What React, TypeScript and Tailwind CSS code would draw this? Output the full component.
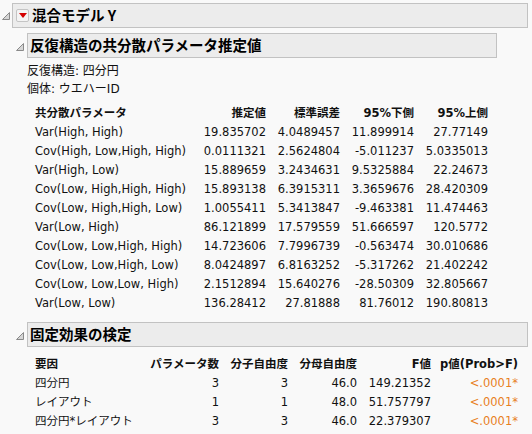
import React from "react";

const body = { fontFamily: '"DejaVu Sans", "Noto Sans CJK JP", sans-serif' };
const title = { fontFamily: '"Noto Sans CJK JP", "DejaVu Sans", sans-serif' };

function Tri() {
  return (
    <svg width="8" height="8" viewBox="0 0 8 8" className="shrink-0">
      <polygon points="7.5,0.5 7.5,7.5 0.5,7.5" fill="#d6d6d6" stroke="#8a8a8a" strokeWidth="1" />
    </svg>
  );
}

function RedBtn() {
  return (
    <div className="w-[13px] h-[13px] border border-[#c4c4c4] rounded-[2px] bg-[#f4f4f4] flex items-center justify-center shrink-0">
      <svg width="8" height="5" viewBox="0 0 8 5">
        <polygon points="0,0 8,0 4,5" fill="#d40000" />
      </svg>
    </div>
  );
}

const covRows: [string, string, string, string, string][] = [
  ["Var(High, High)", "19.835702", "4.0489457", "11.899914", "27.77149"],
  ["Cov(High, Low,High, High)", "0.0111321", "2.5624804", "-5.011237", "5.0335013"],
  ["Var(High, Low)", "15.889659", "3.2434631", "9.5325884", "22.24673"],
  ["Cov(Low, High,High, High)", "15.893138", "6.3915311", "3.3659676", "28.420309"],
  ["Cov(Low, High,High, Low)", "1.0055411", "5.3413847", "-9.463381", "11.474463"],
  ["Var(Low, High)", "86.121899", "17.579559", "51.666597", "120.5772"],
  ["Cov(Low, Low,High, High)", "14.723606", "7.7996739", "-0.563474", "30.010686"],
  ["Cov(Low, Low,High, Low)", "8.0424897", "6.8163252", "-5.317262", "21.402242"],
  ["Cov(Low, Low,Low, High)", "2.1512894", "15.640276", "-28.50309", "32.805667"],
  ["Var(Low, Low)", "136.28412", "27.81888", "81.76012", "190.80813"],
];

const fixRows: [string, string, string, string, string][] = [
  ["四分円", "3", "3", "46.0", "149.21352"],
  ["レイアウト", "1", "1", "48.0", "51.757797"],
  ["四分円*レイアウト", "3", "3", "46.0", "22.379307"],
];

export default function App() {
  return (
    <div className="w-[532px] h-[434px] bg-[#f9f9f9] text-[#111] overflow-hidden pt-[3px]" style={body}>
      {/* top outline */}
      <div className="flex items-start">
        <div className="w-[12px] pl-[2px] pt-[9px] shrink-0">
          <Tri />
        </div>
        <div className="w-[516px] h-[25px] bg-[#ececec] border border-[#c2c2c2] flex items-center pl-[3px] gap-[3px]">
          <RedBtn />
          <span className="text-[14.5px] font-bold text-black leading-none" style={title}>
            混合モデル Y
          </span>
        </div>
      </div>

      {/* second outline */}
      <div className="flex items-start mt-[5px] pl-[16px]">
        <div className="w-[11px] pt-[10px] shrink-0">
          <Tri />
        </div>
        <div className="w-[470px] h-[25px] bg-[#ececec] border border-[#c2c2c2] flex items-center pl-[2px]">
          <span className="text-[14.5px] font-bold text-black leading-none" style={title}>
            反復構造の共分散パラメータ推定値
          </span>
        </div>
      </div>

      <div className="pl-[27px] mt-[4px] text-[12px] leading-[18px]">
        <div>反復構造: 四分円</div>
        <div>個体: ウエハーID</div>
      </div>

      <div className="pl-[35px] mt-[6px] text-[11.5px]">
        <div className="grid grid-cols-[160px_71px_74px_74px_74px] h-[19px] items-center font-bold">
          <div>共分散パラメータ</div>
          <div className="text-right">推定値</div>
          <div className="text-right">標準誤差</div>
          <div className="text-right">95%下側</div>
          <div className="text-right">95%上側</div>
        </div>
        {covRows.map((r) => (
          <div key={r[0]} className="grid grid-cols-[160px_71px_74px_74px_74px] h-[19px] items-center">
            <div className="whitespace-nowrap">{r[0]}</div>
            <div className="text-right">{r[1]}</div>
            <div className="text-right">{r[2]}</div>
            <div className="text-right">{r[3]}</div>
            <div className="text-right">{r[4]}</div>
          </div>
        ))}
      </div>

      {/* third outline */}
      <div className="flex items-start mt-[9px] pl-[16px]">
        <div className="w-[11px] pt-[10px] shrink-0">
          <Tri />
        </div>
        <div className="w-[501px] h-[25px] bg-[#ececec] border border-[#c2c2c2] flex items-center pl-[2px]">
          <span className="text-[14.5px] font-bold text-black leading-none" style={title}>
            固定効果の検定
          </span>
        </div>
      </div>

      <div className="pl-[35px] mt-[8px] text-[11.5px]">
        <div className="grid grid-cols-[114px_70px_69px_69px_74px_87px] h-[19px] items-center font-bold">
          <div>要因</div>
          <div className="text-right whitespace-nowrap">パラメータ数</div>
          <div className="text-right whitespace-nowrap">分子自由度</div>
          <div className="text-right whitespace-nowrap">分母自由度</div>
          <div className="text-right">F値</div>
          <div className="text-right whitespace-nowrap">p値(Prob&gt;F)</div>
        </div>
        {fixRows.map((r) => (
          <div key={r[0]} className="grid grid-cols-[114px_70px_69px_69px_74px_87px] h-[19px] items-center">
            <div className="whitespace-nowrap">{r[0]}</div>
            <div className="text-right">{r[1]}</div>
            <div className="text-right">{r[2]}</div>
            <div className="text-right">{r[3]}</div>
            <div className="text-right">{r[4]}</div>
            <div className="text-right text-[#e8801e]">&lt;.0001*</div>
          </div>
        ))}
      </div>
    </div>
  );
}
